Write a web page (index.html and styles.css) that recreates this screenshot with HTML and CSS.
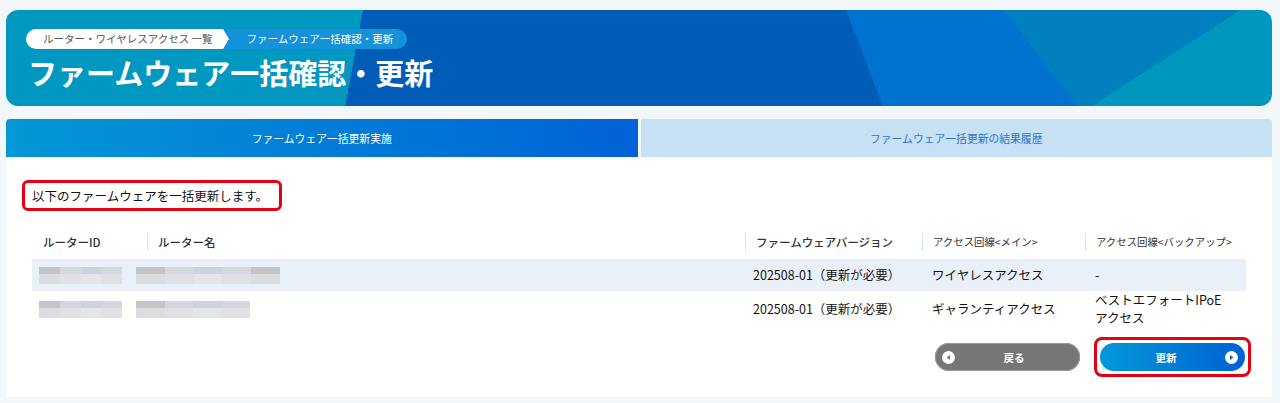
FILE: index.html
```html
<!DOCTYPE html>
<html lang="ja">
<head>
    <meta charset="UTF-8">
    <meta name="viewport" content="width=device-width, initial-scale=1.0">
    <title>ファームウェア一括確認・更新</title>
    <link rel="stylesheet" href="styles.css">
</head>
<body>
    <header class="page-head">
        <nav class="crumbs">
            <span class="crumb-home">ルーター・ワイヤレスアクセス 一覧</span>
            <span class="crumb-current">ファームウェア一括確認・更新</span>
        </nav>
        <h1>ファームウェア一括確認・更新</h1>
    </header>

    <div class="tabs">
        <div class="tab active">ファームウェア一括更新実施</div>
        <div class="tab">ファームウェア一括更新の結果履歴</div>
    </div>

    <section class="panel">
        <p class="notice">以下のファームウェアを一括更新します。</p>

        <div class="table">
            <div class="row head">
                <div class="cell first">ルーターID</div>
                <div class="cell sep">ルーター名</div>
                <div class="cell sep">ファームウェアバージョン</div>
                <div class="cell sep small">アクセス回線&lt;メイン&gt;</div>
                <div class="cell sep small">アクセス回線&lt;バックアップ&gt;</div>
            </div>
            <div class="row data shaded">
                <div class="cell first"><span class="blur w83"><i></i><i></i><i></i><i></i></span></div>
                <div class="cell"><span class="blur w144 shift"><i></i><i></i><i></i><i></i><i></i></span></div>
                <div class="cell">202508-01（更新が必要）</div>
                <div class="cell">ワイヤレスアクセス</div>
                <div class="cell">-</div>
            </div>
            <div class="row data">
                <div class="cell first"><span class="blur w83"><i></i><i></i><i></i><i></i></span></div>
                <div class="cell"><span class="blur w114 shift"><i></i><i></i><i></i><i></i></span></div>
                <div class="cell">202508-01（更新が必要）</div>
                <div class="cell">ギャランティアクセス</div>
                <div class="cell">ベストエフォートIPoE<br>アクセス</div>
            </div>
        </div>

        <div class="actions">
            <button class="btn back">
                <svg class="btn-icon" viewBox="0 0 14 14" width="13" height="13"><circle cx="7" cy="7" r="7" fill="#fff"/><path d="M8.6 4.4 L5 7 L8.6 9.6 Z" fill="#767676"/></svg>
                <span>戻る</span>
            </button>
            <div class="highlight">
                <button class="btn primary">
                    <span>更新</span>
                    <svg class="btn-icon" viewBox="0 0 14 14" width="13" height="13"><circle cx="7" cy="7" r="7" fill="#fff"/><path d="M5.4 4.4 L9 7 L5.4 9.6 Z" fill="#0062d4"/></svg>
                </button>
            </div>
        </div>
    </section>
</body>
</html>
```

FILE: styles.css
```css
body {
    margin: 0;
    padding: 10px 8px 6px 6px;
    background: #f3f7fa;
    font-family: "Noto Sans CJK JP", "Noto Sans", sans-serif;
    color: #222;
}
.page-head {
    border-radius: 12px;
    padding: 19px 22px 16px 20px;
    color: white;
    background:
        linear-gradient(147.1deg, transparent 670.6px, #0097bf 670.6px),
        linear-gradient(52.3deg, transparent 848px, #0080bf 848px),
        linear-gradient(69.1deg, transparent 819px, #0072cf 819px),
        linear-gradient(100.5deg, transparent 351px, #005db7 351px),
        #0097c1;
}
.crumbs {
    display: flex;
    height: 20px;
    font-size: 10.5px;
    line-height: 20px;
}
.crumb-home {
    position: relative;
    background: white;
    color: #555;
    padding: 0 10px 0 17px;
    border-radius: 10px 0 0 10px;
}
.crumb-home::after {
    content: "";
    position: absolute;
    top: 0;
    right: -6px;
    border-top: 10px solid transparent;
    border-bottom: 10px solid transparent;
    border-left: 6px solid white;
}
.crumb-current {
    background: #1592d9;
    padding: 0 14px 0 24px;
    border-radius: 0 10px 10px 0;
}
.page-head h1 {
    margin: 6px 0 0 2px;
    font-size: 29px;
    line-height: 35px;
    font-weight: 700;
}
.tabs {
    display: flex;
    gap: 3px;
    margin-top: 13px;
}
.tab {
    flex: 1;
    height: 38px;
    line-height: 38px;
    text-align: center;
    font-size: 10.8px;
    background: #c6e0f4;
    color: #2f78cf;
    border-radius: 0 4px 0 0;
}
.tab.active {
    background: linear-gradient(90deg, #0498d6, #0062d8);
    color: white;
    border-radius: 4px 0 0 0;
}
.panel {
    background: white;
    padding: 23px 16px 20px;
}
.notice {
    display: inline-block;
    margin: 0;
    border: 3px solid #e60012;
    border-radius: 6px;
    padding: 0 11px 0 7px;
    font-size: 12.5px;
    line-height: 25px;
    font-weight: 400;
    color: #111;
}
.table {
    margin: 19px 10px 0;
}
.row {
    display: grid;
    grid-template-columns: 115px 598px 177px 163px 1fr;
    align-items: center;
}
.row.head {
    height: 24px;
    margin-bottom: 5px;
    font-size: 11.5px;
    font-weight: 500;
    color: #333;
}
.row.head .cell {
    line-height: 18px;
}
.row.head .cell.first {
    padding-left: 11px;
}
.row.head .sep {
    border-left: 1px solid #d4e3f1;
    padding-left: 10px;
}
.row.head .small {
    font-size: 10.4px;
    font-weight: 400;
}
.row.data {
    min-height: 32px;
    font-size: 12.5px;
    line-height: 18px;
    font-weight: 400;
    color: #111;
}
.row.data .cell {
    padding-left: 10px;
}
.row.data .cell:nth-child(3) {
    padding-left: 8px;
}
.row.data .cell.first {
    padding-left: 7px;
}
.row.shaded {
    background: #e9f0f7;
}
.blur {
    display: flex;
    height: 17px;
    background: linear-gradient(#d4d7dc 0 40%, #dfe1e4 40%);
}
.blur i {
    flex: 1;
    height: 100%;
}
.blur i:nth-child(odd) {
    background: linear-gradient(rgba(150, 140, 140, 0.25) 0 40%, rgba(0, 0, 0, 0.02) 40%);
}
.blur i:nth-child(3n) {
    background: linear-gradient(rgba(190, 200, 215, 0.35) 0 40%, rgba(255, 255, 255, 0.15) 40%);
}
.w83 { width: 83px; }
.w144 { width: 144px; }
.w114 { width: 114px; }
.shift { margin-left: -21px; }
.actions {
    display: flex;
    justify-content: flex-end;
    align-items: center;
    gap: 14px;
    margin-top: 10px;
    padding-right: 5px;
}
.highlight {
    border: 3px solid #e60012;
    border-radius: 8px;
    padding: 3px;
}
.btn {
    display: flex;
    align-items: center;
    width: 145px;
    height: 28px;
    border: none;
    border-radius: 14px;
    padding: 0 7px;
    color: white;
    font-family: inherit;
    font-size: 10.5px;
    font-weight: 700;
}
.btn span {
    flex: 1;
    text-align: center;
}
.btn.back {
    background: #767676;
    box-shadow: inset 0 0 0 1px #9a9a9a;
}
.btn.primary {
    background: linear-gradient(90deg, #0398d8, #0061d3);
}
.btn-icon {
    flex: none;
}
```
